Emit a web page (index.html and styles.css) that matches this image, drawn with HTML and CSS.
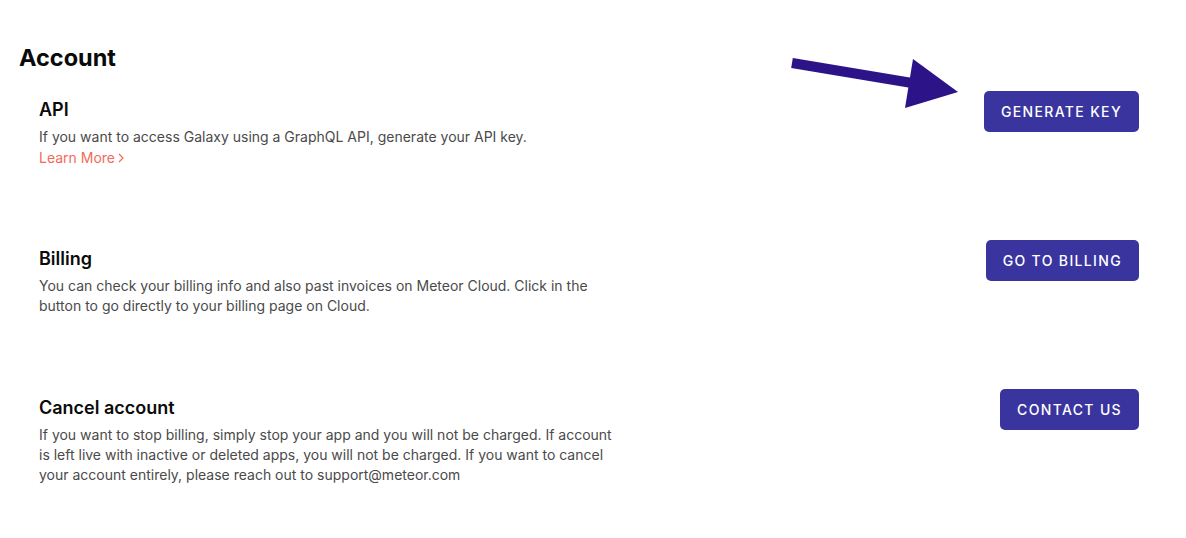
FILE: index.html
```html
<!DOCTYPE html>
<html lang="en">
<head>
<meta charset="utf-8">
<title>Account</title>
<link rel="stylesheet" href="styles.css">
</head>
<body>
<main class="page">
  <h1 class="title">Account</h1>
  <section class="row">
    <div class="info">
      <h2 class="heading">API</h2>
      <p class="desc">If you want to access Galaxy using a GraphQL API, generate your API key.</p>
      <a class="learn" href="#">Learn More<svg class="chev" viewBox="0 0 6 10" width="6" height="10"><path d="M1 1l4 4-4 4" fill="none" stroke="currentColor" stroke-width="1.2"/></svg></a>
    </div>
    <button class="btn" type="button">GENERATE KEY</button>
  </section>
  <section class="row">
    <div class="info">
      <h2 class="heading">Billing</h2>
      <p class="desc">You can check your billing info and also past invoices on Meteor Cloud. Click in the button to go directly to your billing page on Cloud.</p>
    </div>
    <button class="btn" type="button">GO TO BILLING</button>
  </section>
  <section class="row">
    <div class="info">
      <h2 class="heading">Cancel account</h2>
      <p class="desc">If you want to stop billing, simply stop your app and you will not be charged. If account is left live with inactive or deleted apps, you will not be charged. If you want to cancel your account entirely, please reach out to support@meteor.com</p>
    </div>
    <button class="btn" type="button">CONTACT US</button>
  </section>
  <svg class="arrow" viewBox="0 0 190 65" width="190" height="65">
    <line x1="12" y1="13" x2="132" y2="33" stroke="#2d1388" stroke-width="10"/>
    <polygon points="133,9 178,42 125,58" fill="#2d1388"/>
  </svg>
</main>
</body>
</html>
```
FILE: styles.css
```css
* { box-sizing: border-box; }
html, body { margin: 0; padding: 0; background: #fff; }
body { font-family: Inter, "Noto Sans", sans-serif; color: #111; }
.page {
  position: relative;
  padding: 43px 47px 0 19px;
}
.title {
  margin: 0 0 18px;
  font-size: 23.5px;
  line-height: 30px;
  font-weight: 700;
  color: #0a0a0a;
}
.row {
  display: flex;
  justify-content: space-between;
  align-items: flex-start;
  min-height: 149px;
  padding-left: 20px;
}
.info { padding-top: 7px; max-width: 580px; }
.heading {
  margin: 0 0 5px;
  font-size: 18px;
  line-height: 24px;
  font-weight: 600;
  color: #0a0a0a;
}
.desc {
  margin: 0;
  font-size: 14px;
  line-height: 20px;
  color: #4a4a4a;
}
.learn {
  display: inline-flex;
  align-items: center;
  gap: 3px;
  font-size: 14px;
  line-height: 20px;
  color: #f26b5b;
  text-decoration: none;
}
.chev { display: block; }
.btn {
  height: 41px;
  padding: 0 17px;
  border: 0;
  border-radius: 5px;
  background: #3a359e;
  color: #fff;
  font-family: Inter, "Noto Sans", sans-serif;
  font-size: 14px;
  font-weight: 500;
  letter-spacing: 1.35px;
  cursor: pointer;
}
.arrow {
  position: absolute;
  left: 780px;
  top: 50px;
}
```
